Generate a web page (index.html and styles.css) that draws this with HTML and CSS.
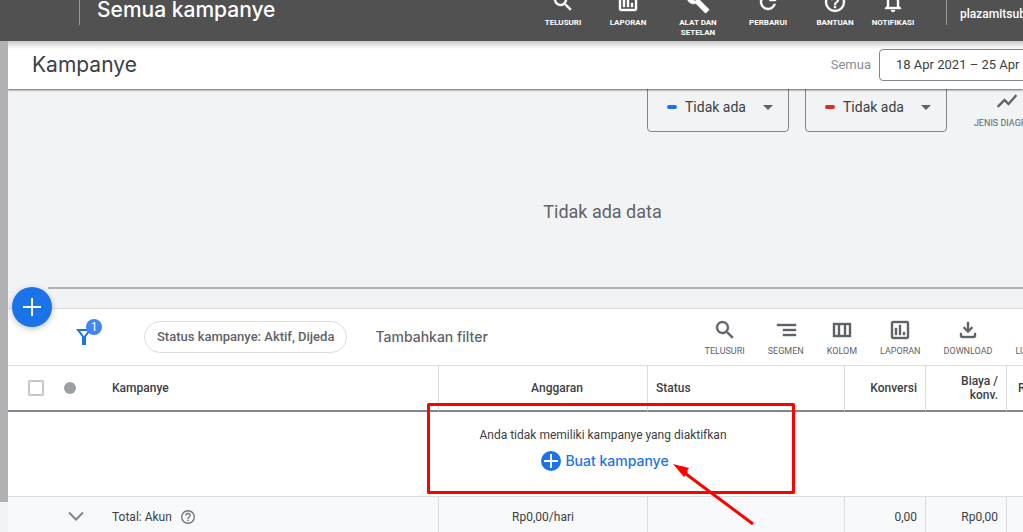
FILE: index.html
```html
<!DOCTYPE html>
<html lang="id">
<head>
<meta charset="utf-8">
<title>Semua kampanye</title>
<link rel="stylesheet" href="styles.css">
</head>
<body>
<header class="topbar">
  <div class="topbar-title">Semua kampanye</div>
  <nav class="topnav">
    <button class="topnav-item first" type="button">
      <svg class="icon" viewBox="0 0 24 24"><path d="M15.500 14h-.79l-.28-.27A6.470 6.470 0 0 0 16 9.500 6.500 6.500 0 1 0 9.500 16c1.610 0 3.090-.59 4.230-1.570l.27.28v.79l5 4.990L20.490 19l-4.990-5zm-6 0C7.010 14 5 11.990 5 9.500S7.010 5 9.500 5 14 7.010 14 9.500 11.990 14 9.500 14z"/></svg>
      <span>TELUSURI</span>
    </button>
    <button class="topnav-item" type="button">
      <svg class="icon" viewBox="0 0 24 24"><path d="M5 3h14a2 2 0 0 1 2 2v14a2 2 0 0 1-2 2H5a2 2 0 0 1-2-2V5c0-1.100.9-2 2-2zm0 2v14h14V5zM7 9h2v8H7zM11 6h2v11h-2zM15 13h2v4h-2z" fill-rule="evenodd"/></svg>
      <span>LAPORAN</span>
    </button>
    <button class="topnav-item" type="button">
      <svg class="icon" viewBox="0 0 24 24"><path d="M22.700 19l-9.100-9.100c.9-2.300.4-5-1.500-6.900-2-2-5-2.400-7.400-1.300L9 6 6 9 1.600 4.700C.4 7.100.9 10.100 2.900 12.100c1.900 1.900 4.600 2.400 6.900 1.500l9.100 9.100c.4.4 1 .4 1.400 0l2.300-2.300c.5-.4.5-1.100.1-1.400z"/><circle cx="8" cy="9" r="4"/><circle cx="9" cy="9" r="1.500" fill="#515151" stroke="none"/></svg>
      <span>ALAT DAN SETELAN</span>
    </button>
    <button class="topnav-item" type="button">
      <svg class="icon" viewBox="0 0 24 24"><path d="M17.650 6.350A8 8 0 1 0 19.730 14h-2.080A6 6 0 1 1 12 6c1.660 0 3.140.69 4.220 1.780L13 11h7V4z"/></svg>
      <span>PERBARUI</span>
    </button>
    <button class="topnav-item help" type="button">
      <svg class="icon" viewBox="0 0 24 24"><path d="M11 18h2v-2h-2v2zm1-16a10 10 0 1 0 0 20 10 10 0 0 0 0-20zm0 18a8 8 0 1 1 0-16 8 8 0 0 1 0 16zm0-14a4 4 0 0 0-4 4h2a2 2 0 1 1 4 0c0 2-3 1.750-3 5h2c0-2.250 3-2.500 3-5a4 4 0 0 0-4-4z"/></svg>
      <span>BANTUAN</span>
    </button>
    <button class="topnav-item bell" type="button">
      <svg class="icon" viewBox="0 0 24 24"><path d="M12 22a2 2 0 0 0 2-2h-4a2 2 0 0 0 2 2zm6-6v-5c0-3.070-1.630-5.640-4.500-6.320V4a1.500 1.500 0 0 0-3 0v.68C7.640 5.360 6 7.920 6 11v5l-2 2v1h16v-1l-2-2zm-2 1H8v-6c0-2.480 1.510-4.500 4-4.500s4 2.020 4 4.500v6z"/></svg>
      <span>NOTIFIKASI</span>
    </button>
  </nav>
  <div class="account">plazamitsubishi</div>
</header>

<div class="shell">
  <div class="rail"></div>
  <main class="main">
    <header class="page-header">
      <h1>Kampanye</h1>
      <span class="range-label">Semua</span>
      <button class="range" type="button">18 Apr 2021 – 25 Apr 2021</button>
    </header>

    <section class="chart">
      <div class="chart-controls">
        <div class="metric">
          <span class="swatch blue"></span>
          <select aria-label="Metrik pertama"><option>Tidak ada</option></select>
          <svg class="caret" viewBox="0 0 10 5"><path d="M0 0h10L5 5z"/></svg>
        </div>
        <div class="metric">
          <span class="swatch red"></span>
          <select aria-label="Metrik kedua"><option>Tidak ada</option></select>
          <svg class="caret" viewBox="0 0 10 5"><path d="M0 0h10L5 5z"/></svg>
        </div>
        <button class="chart-type" type="button">
          <svg class="icon" viewBox="0 0 24 24"><path d="M3.500 18.490l6-6.010 4 4L22 6.920l-1.410-1.410-7.090 7.970-4-4L2 16.990z"/></svg>
          <span>JENIS DIAGRAM</span>
        </button>
      </div>
      <p class="no-data">Tidak ada data</p>
      <div class="axis"></div>
    </section>

    <section class="filters">
      <button class="fab" type="button" aria-label="Buat">
        <svg viewBox="0 0 18 18"><path d="M8 0h2v8h8v2h-8v8H8v-8H0V8h8z"/></svg>
      </button>
      <button class="funnel" type="button" aria-label="Filter">
        <svg viewBox="0 0 16 16"><path d="M2 1h12L9 7.500V15H7V7.500z" fill="none" stroke="currentColor" stroke-width="2"/><path d="M6 8h4v8H6z"/></svg>
        <span class="badge">1</span>
      </button>
      <button class="chip" type="button">Status kampanye: Aktif, Dijeda</button>
      <button class="add-filter" type="button">Tambahkan filter</button>
      <div class="tools">
        <button class="tool" type="button">
          <svg class="icon" viewBox="0 0 24 24"><path d="M15.500 14h-.79l-.28-.27A6.470 6.470 0 0 0 16 9.500 6.500 6.500 0 1 0 9.500 16c1.610 0 3.090-.59 4.230-1.570l.27.28v.79l5 4.990L20.490 19l-4.990-5zm-6 0C7.010 14 5 11.990 5 9.500S7.010 5 9.500 5 14 7.010 14 9.500 11.990 14 9.500 14z"/></svg>
          <span>TELUSURI</span>
        </button>
        <button class="tool" type="button">
          <svg class="icon" viewBox="0 0 24 24"><path d="M3 6h19v2H3zM9 11h13v2H9zM9 16h13v2H9z"/></svg>
          <span>SEGMEN</span>
        </button>
        <button class="tool" type="button">
          <svg class="icon" viewBox="0 0 24 24"><path d="M3 5h18v14H3zM5 7v10h3V7zM10 7v10h4V7zM16 7v10h3V7z" fill-rule="evenodd"/></svg>
          <span>KOLOM</span>
        </button>
        <button class="tool" type="button">
          <svg class="icon" viewBox="0 0 24 24"><path d="M5 3h14a2 2 0 0 1 2 2v14a2 2 0 0 1-2 2H5a2 2 0 0 1-2-2V5c0-1.100.9-2 2-2zm0 2v14h14V5zM7 10h2v7H7zM11 7h2v10h-2zM15 14h2v3h-2z" fill-rule="evenodd"/></svg>
          <span>LAPORAN</span>
        </button>
        <button class="tool" type="button">
          <svg class="icon" viewBox="0 0 24 24"><path d="M11 4h2v7.200l2.600-2.600L17 10l-5 5-5-5 1.400-1.400 2.600 2.600zM4 15h2v3h12v-3h2v3a2 2 0 0 1-2 2H6a2 2 0 0 1-2-2z"/></svg>
          <span>DOWNLOAD</span>
        </button>
        <button class="tool" type="button">
          <svg class="icon" viewBox="0 0 24 24"><path d="M5 5h5v2H7v3H5zM14 5h5v5h-2V7h-3zM5 14h2v3h3v2H5zM17 14h2v5h-5v-2h3z"/></svg>
          <span>LUASKAN</span>
        </button>
      </div>
    </section>

    <div class="table-area">
      <table class="grid">
        <colgroup>
          <col class="c-check"><col class="c-dot"><col><col class="c-budget"><col class="c-status"><col class="c-num"><col class="c-num"><col class="c-last">
        </colgroup>
        <thead>
          <tr>
            <th class="check"><input type="checkbox" aria-label="Pilih semua"></th>
            <th><span class="dot"></span></th>
            <th>Kampanye</th>
            <th class="line budget">Anggaran</th>
            <th class="line">Status</th>
            <th class="line num">Konversi</th>
            <th class="line num">Biaya / konv.</th>
            <th class="line last">Rasio konv.</th>
          </tr>
        </thead>
        <tbody>
          <tr class="empty">
            <td colspan="8">
              <p>Anda tidak memiliki kampanye yang diaktifkan</p>
              <a class="create" href="#">
                <svg viewBox="0 0 20 20"><circle cx="10" cy="10" r="10"/><path d="M9 3h2v6h6v2h-6v6H9v-6H3V9h6z" fill="#fff"/></svg>
                Buat kampanye
              </a>
            </td>
          </tr>
        </tbody>
        <tfoot>
          <tr>
            <td></td>
            <td class="expand"><button type="button" aria-label="Luaskan total"><svg viewBox="0 0 16 10"><path d="M1 1.500l7 7 7-7" fill="none" stroke="currentColor" stroke-width="2"/></svg></button></td>
            <td><span class="total">Total: Akun <svg viewBox="2 2 20 20"><path d="M11 18h2v-2h-2v2zm1-16a10 10 0 1 0 0 20 10 10 0 0 0 0-20zm0 18a8 8 0 1 1 0-16 8 8 0 0 1 0 16zm0-14a4 4 0 0 0-4 4h2a2 2 0 1 1 4 0c0 2-3 1.750-3 5h2c0-2.250 3-2.500 3-5a4 4 0 0 0-4-4z"/></svg></span></td>
            <td class="line center">Rp0,00/hari</td>
            <td class="line"></td>
            <td class="line num">0,00</td>
            <td class="line num">Rp0,00</td>
            <td class="line"></td>
          </tr>
        </tfoot>
      </table>
      <svg class="callout" viewBox="0 0 368 122">
        <path d="M1.500 1.500h365v88h-365z" fill="none" stroke="#f00" stroke-width="3" stroke-linejoin="round"/>
        <path d="M326 121l-67-50" fill="none" stroke="#f00" stroke-width="3"/>
        <path d="M246 61l16 4-2 3 1 1-4 5z" fill="#f00"/>
      </svg>
    </div>
  </main>
</div>
</body>
</html>
```

FILE: styles.css
```css
* { box-sizing: border-box; }

body {
  margin: 0;
  height: 100vh;
  overflow: hidden;
  display: flex;
  flex-direction: column;
  background: #f1f3f4;
  color: #3c4043;
  font: 12px/16px Roboto, sans-serif;
}

h1, p { margin: 0; }

button {
  margin: 0;
  padding: 0;
  border: 0;
  background: none;
  color: inherit;
  font: inherit;
  white-space: nowrap;
}

svg { display: block; fill: currentColor; }

.icon {
  width: 24px;
  height: 24px;
  flex: none;
  stroke: currentColor;
  stroke-width: .4;
}

/* Top bar */
.topbar {
  flex: none;
  height: 41px;
  display: flex;
  align-items: flex-start;
  overflow: hidden;
  background: #515151;
  color: #fff;
}

.topbar-title {
  height: 25px;
  margin-left: 79px;
  padding-left: 17px;
  border-left: 1px solid #999;
  font: 500 21px/20px Inter, sans-serif;
  white-space: nowrap;
}

.topnav {
  display: flex;
  margin-left: auto;
  margin-top: -10px;
}

.topnav-item {
  width: 70px;
  padding: 0 14px;
  display: flex;
  flex-direction: column;
  align-items: center;
  gap: 4px;
  font-size: 8px;
  font-weight: 700;
  line-height: 10px;
  white-space: normal;
}

.topnav-item.first { width: 60px; padding: 0; }
.topnav-item.help { width: 64px; padding: 0; }
.topnav-item.bell { width: 52px; padding: 0; }

.account {
  width: 77px;
  height: 25px;
  margin-left: 27px;
  padding-left: 13px;
  border-left: 1px solid #999;
  font-weight: 500;
  line-height: 28px;
}

/* Shell */
.shell { flex: 1; display: flex; min-height: 0; }

.rail { flex: none; width: 8px; background: #b1b1b3; margin-bottom: 30px; }

.main { flex: 1; min-width: 0; overflow: hidden; }

.page-header {
  position: relative;
  z-index: 1;
  height: 48px;
  display: flex;
  align-items: center;
  padding-left: 24px;
  background: linear-gradient(#c8c8c8, #fff 8px);
  box-shadow: 0 1px 2px rgba(0, 0, 0, .6);
}

.page-header h1 { font: 400 21px/28px Inter, sans-serif; }

.range-label { margin-left: auto; color: #8a8d91; font-size: 13px; }

.range {
  width: 152px;
  height: 32px;
  margin-left: 8px;
  margin-right: -8px;
  padding-left: 16px;
  border: 1px solid #80868b;
  border-radius: 4px;
  text-align: left;
  font-size: 13px;
  overflow: hidden;
}

/* Chart */
.chart {
  display: flex;
  flex-direction: column;
  height: 219px;
  background: #f1f3f4;
}

.chart-controls {
  display: flex;
  justify-content: flex-end;
  align-items: flex-end;
  gap: 16px;
  height: 43px;
}

.metric {
  width: 142px;
  height: 50px;
  padding: 0 15px 0 19px;
  display: flex;
  align-items: center;
  border: 1px solid #80868b;
  border-radius: 4px;
}

.swatch { width: 10px; height: 4px; border-radius: 2px; }
.swatch.blue { background: #1a73e8; }
.swatch.red { background: #d93025; }

.metric select {
  appearance: none;
  flex: 1;
  min-width: 0;
  margin-left: 8px;
  padding: 0;
  border: 0;
  background: none;
  color: #3c4043;
  font: 14px/20px Roboto, sans-serif;
}

.caret { width: 10px; height: 5px; color: #5f6368; }

.chart-type {
  width: 64px;
  margin: 0 -16px 4px 12px;
  display: flex;
  flex-direction: column;
  align-items: center;
  gap: 5px;
  color: #5f6368;
  font-size: 9px;
  line-height: 10px;
}

.no-data {
  flex: 1;
  padding-top: 68px;
  margin-left: 174px;
  text-align: center;
  color: #5f6368;
  font-size: 18px;
  line-height: 24px;
}

.axis { height: 2px; margin: 0 0 19px 40px; background: #b1b1b3; }

/* Filter bar */
.filters {
  position: relative;
  height: 58px;
  display: flex;
  align-items: center;
  padding-left: 68px;
  border-top: 1px solid #dadce0;
  border-bottom: 1px solid #dadce0;
  background: #fff;
  color: #5f6368;
}

.fab {
  position: absolute;
  left: 4px;
  top: -22px;
  width: 40px;
  height: 40px;
  display: flex;
  align-items: center;
  justify-content: center;
  border-radius: 50%;
  background: #1a73e8;
  color: #fff;
  box-shadow: 0 2px 6px rgba(60, 64, 67, .3);
}

.fab svg { width: 18px; height: 18px; }

.funnel { position: relative; color: #1a73e8; }
.funnel svg { width: 16px; height: 16px; }

.badge {
  position: absolute;
  left: 10px;
  top: -10px;
  width: 16px;
  height: 16px;
  border-radius: 50%;
  background: #4285f4;
  color: #fff;
  text-align: center;
}

.chip {
  height: 32px;
  margin-left: 52px;
  padding: 0 12px;
  border: 1px solid #dadce0;
  border-radius: 16px;
  font-size: 13px;
  font-weight: 500;
}

.add-filter { margin-left: 28px; font: 500 14px/20px Inter, sans-serif; }

.tools {
  display: flex;
  gap: 23px;
  margin-left: auto;
  margin-right: -32px;
}

.tool {
  display: flex;
  flex-direction: column;
  align-items: center;
  gap: 4px;
  font-size: 9px;
  line-height: 10px;
}

/* Table */
.table-area { position: relative; }

.grid {
  width: calc(100% + 175px);
  table-layout: fixed;
  border-collapse: separate;
  border-spacing: 0;
  background: #fff;
}

.c-check, .c-dot { width: 48px; }
.c-budget { width: 209px; }
.c-status { width: 197px; }
.c-num { width: 81px; }
.c-last { width: 192px; }

.grid th, .grid td { padding: 0 8px; text-align: left; }

.grid th {
  height: 46px;
  border-bottom: 2px solid #80868b;
  font-weight: 500;
  line-height: 14px;
}

.grid .line { border-left: 1px solid #dadce0; }
.grid .num { text-align: right; }
.grid .center { text-align: center; }
.grid .budget { padding: 0 0 0 28px; text-align: center; }
.grid .last { padding-left: 11px; }
.grid .check { padding: 0 0 0 20px; }

.check input {
  appearance: none;
  display: block;
  width: 16px;
  height: 16px;
  margin: 0;
  border: 2px solid #c6c6c6;
  border-radius: 2px;
}

.dot {
  display: block;
  width: 12px;
  height: 12px;
  border-radius: 50%;
  background: #9aa0a6;
}

.grid .empty td { height: 84px; padding-bottom: 6px; text-align: center; }

.create {
  display: inline-flex;
  align-items: center;
  gap: 4px;
  margin-top: 8px;
  padding-left: 4px;
  color: #1a73e8;
  font: 500 14px/20px Inter, sans-serif;
  text-decoration: none;
}

.create svg { width: 20px; height: 20px; }

.grid tfoot td {
  height: 41px;
  border-top: 1px solid #dadce0;
  background: #f8f9fa;
}

.grid .expand { padding-left: 12px; color: #80868b; }
.expand svg { width: 16px; height: 10px; }

.total { display: flex; align-items: center; gap: 9px; }
.total svg { width: 14px; height: 14px; color: #70757a; }

.callout {
  position: absolute;
  left: 419px;
  top: 37px;
  width: 368px;
  height: 122px;
  pointer-events: none;
}
```
